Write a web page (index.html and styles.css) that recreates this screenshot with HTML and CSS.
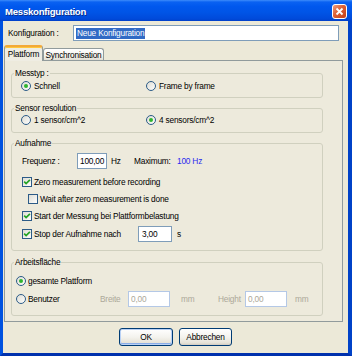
FILE: index.html
```html
<!DOCTYPE html>
<html>
<head>
<meta charset="utf-8">
<link rel="stylesheet" href="styles.css">
</head>
<body>
<svg class="defs" width="0" height="0">
  <defs>
    <linearGradient id="ctrlg" x1="0" y1="0" x2="1" y2="1">
      <stop offset="0" stop-color="#DCDBD2"/>
      <stop offset="1" stop-color="#FFFFFF"/>
    </linearGradient>
    <linearGradient id="closeg" x1="0" y1="0" x2="1" y2="1">
      <stop offset="0" stop-color="#F2A386"/>
      <stop offset="0.45" stop-color="#DD6035"/>
      <stop offset="1" stop-color="#C23C16"/>
    </linearGradient>
    <symbol id="radio-off" viewBox="0 0 10 10">
      <circle cx="5" cy="5" r="4.5" fill="url(#ctrlg)" stroke="#2C5B87"/>
    </symbol>
    <symbol id="radio-on" viewBox="0 0 10 10">
      <circle cx="5" cy="5" r="4.5" fill="url(#ctrlg)" stroke="#2C5B87"/>
      <circle cx="5" cy="5" r="2" fill="#2FB52F"/>
    </symbol>
    <symbol id="check-off" viewBox="0 0 10 10">
      <rect x=".5" y=".5" width="9" height="9" fill="url(#ctrlg)" stroke="#2C5B87"/>
    </symbol>
    <symbol id="check-on" viewBox="0 0 10 10">
      <rect x=".5" y=".5" width="9" height="9" fill="url(#ctrlg)" stroke="#2C5B87"/>
      <path d="M2.2 4.7 L4.1 6.6 L7.9 2.8" fill="none" stroke="#22A322" stroke-width="1.7"/>
    </symbol>
  </defs>
</svg>

<div class="window">
  <div class="titlebar">
    <span class="title">Messkonfiguration</span>
    <svg class="close" width="15" height="15" viewBox="0 0 15 15">
      <rect x=".5" y=".5" width="14" height="14" rx="2.5" fill="url(#closeg)" stroke="#FFFFFF"/>
      <path d="M4.5 4.5 L10.5 10.5 M10.5 4.5 L4.5 10.5" stroke="#FFFFFF" stroke-width="1.8"/>
    </svg>
  </div>
  <div class="client">
    <div class="config-row">
      <span class="config-label">Konfiguration :</span>
      <div class="textbox config-input"><span class="selected">Neue Konfiguration</span></div>
    </div>

    <div class="tabs">
      <div class="tab active">Plattform</div>
      <div class="tab">Synchronisation</div>
    </div>

    <div class="panel">
      <fieldset class="group g-messtyp">
        <legend>Messtyp :</legend>
        <div class="radio-row">
          <div class="opt col1"><svg class="ctl"><use href="#radio-on"/></svg><span>Schnell</span></div>
          <div class="opt"><svg class="ctl"><use href="#radio-off"/></svg><span>Frame by frame</span></div>
        </div>
      </fieldset>

      <fieldset class="group g-sensor">
        <legend>Sensor resolution</legend>
        <div class="radio-row">
          <div class="opt col1"><svg class="ctl"><use href="#radio-off"/></svg><span>1 sensor/cm^2</span></div>
          <div class="opt"><svg class="ctl"><use href="#radio-on"/></svg><span>4 sensors/cm^2</span></div>
        </div>
      </fieldset>

      <fieldset class="group g-aufnahme">
        <legend>Aufnahme</legend>
        <div class="freq-row">
          <span class="freq-label">Frequenz :</span>
          <div class="textbox freq-input">100,00</div>
          <span class="hz">Hz</span>
          <span class="max-label">Maximum:</span>
          <span class="max-value">100 Hz</span>
        </div>
        <div class="check-row first">
          <svg class="ctl"><use href="#check-on"/></svg><span>Zero measurement before recording</span>
        </div>
        <div class="check-row indent">
          <svg class="ctl"><use href="#check-off"/></svg><span>Wait after zero measurement is done</span>
        </div>
        <div class="check-row">
          <svg class="ctl"><use href="#check-on"/></svg><span>Start der Messung bei Plattformbelastung</span>
        </div>
        <div class="check-row last">
          <svg class="ctl"><use href="#check-on"/></svg><span class="stop-label">Stop der Aufnahme nach</span>
          <div class="textbox stop-input">3,00</div>
          <span class="unit-s">s</span>
        </div>
      </fieldset>

      <fieldset class="group g-arbeit">
        <legend>Arbeitsfläche</legend>
        <div class="area-row first">
          <svg class="ctl"><use href="#radio-on"/></svg><span>gesamte Plattform</span>
        </div>
        <div class="area-row second">
          <div class="opt benutzer"><svg class="ctl"><use href="#radio-off"/></svg><span>Benutzer</span></div>
          <span class="dis lbl-breite">Breite</span>
          <div class="textbox dis-input">0,00</div>
          <span class="dis mm1">mm</span>
          <span class="dis lbl-height">Height</span>
          <div class="textbox dis-input">0,00</div>
          <span class="dis mm2">mm</span>
        </div>
      </fieldset>
    </div>

    <div class="buttons">
      <button class="btn ok">OK</button>
      <button class="btn cancel">Abbrechen</button>
    </div>
  </div>
</div>
</body>
</html>
```

FILE: styles.css
```css
* { box-sizing: border-box; }

body {
  margin: 0;
  background: #FFFFFF;
  font-family: "Liberation Sans", Arial, sans-serif;
  font-size: 8.3px;
  letter-spacing: -0.2px;
  color: #000000;
}

.defs { position: absolute; width: 0; height: 0; overflow: hidden; }

.window {
  width: 352px;
  height: 356px;
  display: flex;
  flex-direction: column;
  white-space: nowrap;
}

.titlebar {
  height: 21px;
  display: flex;
  align-items: center;
  justify-content: space-between;
  padding: 2px 5px 0 5px;
  background: linear-gradient(#3D8CFB 0, #0A62F2 2px, #0058EE 30%, #0054E6 60%, #004ADA 90%, #003FC8 100%);
}

.title {
  color: #FFFFFF;
  font-weight: bold;
  font-size: 9.6px;
  letter-spacing: -0.25px;
  text-shadow: 1px 1px 0 #0A2E8C;
}

.close { display: block; margin-top: -1px; }

.client {
  flex: 1;
  display: flex;
  flex-direction: column;
  background: #ECE9D8;
  border-left: 3px solid #0052E0;
  border-right: 4px solid #0042C8;
  border-bottom: 3px solid #0031AD;
}

.config-row {
  display: flex;
  align-items: center;
  height: 16px;
  margin-top: 4px;
  padding-left: 5px;
}

.config-label { width: 65px; }

.textbox {
  background: #FFFFFF;
  border: 1px solid #7F9DB9;
  height: 16px;
  display: flex;
  align-items: center;
  padding-left: 2px;
}

.config-input { width: 266px; }

.selected {
  background: #316AC5;
  color: #FFFFFF;
  padding: 0 1px;
  line-height: 11px;
}

.tabs {
  display: flex;
  align-items: flex-end;
  height: 15px;
  margin-top: 4px;
  padding-left: 1px;
  position: relative;
  z-index: 1;
}

.tab {
  height: 12px;
  width: 61px;
  border: 1px solid #919B9C;
  border-bottom: none;
  border-radius: 3px 3px 0 0;
  background: linear-gradient(#FFFFFF, #F3F2EC 60%, #E2DFD4);
  display: flex;
  align-items: center;
  justify-content: center;
  padding-top: 1px;
}

.tab.active {
  width: 39px;
  height: 16px;
  margin-bottom: -1px;
  background: #EFEDE3;
  border-top: 2px solid #F2A93A;
  padding-top: 0;
  box-shadow: inset 0 1px 0 #FFC83C;
}

.panel {
  margin-left: 1px;
  width: 339px;
  border: 1px solid #919B9C;
  background: #EDEADC;
  padding: 7px 0 5px 6px;
}

.group {
  width: 312px;
  margin: 0;
  padding: 0;
  border: 1px solid #D0D0BF;
  border-radius: 3px;
  min-inline-size: 0;
}

.group + .group { margin-top: 5px; }
.group.g-arbeit { margin-top: 6px; }

legend {
  line-height: 10px;
  padding: 0 1px;
  margin-left: 2px;
}

.g-messtyp { padding-bottom: 5px; }
.g-sensor { padding-bottom: 6px; }
.g-aufnahme { padding-bottom: 8px; }
.g-arbeit { padding-bottom: 8px; }

.radio-row {
  display: flex;
  align-items: center;
  height: 12px;
  padding-left: 9px;
}

.g-messtyp .radio-row { margin-top: 2px; }
.g-sensor .radio-row { margin-top: 1px; }

.opt {
  display: flex;
  align-items: center;
  gap: 3px;
}

.col1 { width: 125px; }

.ctl { width: 10px; height: 10px; display: block; flex: none; }

.freq-row {
  display: flex;
  align-items: center;
  height: 16px;
  margin-top: 5px;
  padding-left: 10px;
}

.freq-label { width: 55px; }
.freq-input { width: 30px; padding-left: 2px; }
.hz { width: 23px; margin-left: 4px; }
.max-label { width: 43px; }
.max-value { color: #2A2AF0; }

.check-row {
  display: flex;
  align-items: center;
  gap: 2px;
  height: 16px;
  margin-top: 1px;
  padding-left: 10px;
}

.check-row.first { margin-top: 5px; }
.check-row.indent { padding-left: 16px; }
.check-row.last { margin-top: 2px; }

.stop-label { width: 102px; }
.stop-input { width: 34px; padding-left: 3px; }
.unit-s { margin-left: 3px; }

.area-row {
  display: flex;
  align-items: center;
  height: 16px;
  padding-left: 4px;
}

.area-row.first { margin-top: 6px; gap: 2px; }
.area-row.second { margin-top: 2px; }

.benutzer { width: 84px; gap: 2px; }

.dis { color: #ACA899; }
.lbl-breite { width: 28px; }
.dis-input {
  width: 42px;
  border-color: #B4C8E6;
  color: #ACA899;
}
.mm1 { width: 37px; margin-left: 11px; }
.lbl-height { width: 27px; }
.mm2 { margin-left: 8px; }

.buttons {
  display: flex;
  justify-content: center;
  gap: 6px;
  margin-top: 6px;
}

.btn {
  font-family: inherit;
  font-size: inherit;
  letter-spacing: inherit;
  color: #000000;
  height: 18px;
  padding: 0;
  border: 1px solid #003C74;
  border-radius: 3px;
  background: linear-gradient(#FFFFFF, #F4F3EE 50%, #E6E3D8 85%, #D6D0C5);
}

.btn.ok {
  width: 54px;
  box-shadow: inset 0 0 0 1px #B9D1F5, inset 0 -1px 0 1px #8AADE8;
}

.btn.cancel {
  width: 53px;
  box-shadow: inset 0 -1px 0 #D6D0C5;
}
```
